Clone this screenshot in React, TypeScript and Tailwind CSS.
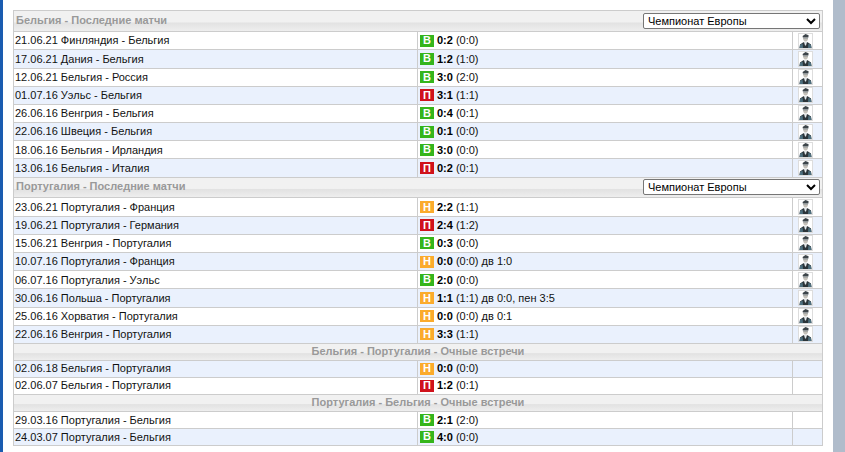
import React from 'react';

type Match = { text: string; res: 'В' | 'Н' | 'П'; score: string; rest: string };

const belgium: Match[] = [
  { text: '21.06.21 Финляндия - Бельгия', res: 'В', score: '0:2', rest: '(0:0)' },
  { text: '17.06.21 Дания - Бельгия', res: 'В', score: '1:2', rest: '(1:0)' },
  { text: '12.06.21 Бельгия - Россия', res: 'В', score: '3:0', rest: '(2:0)' },
  { text: '01.07.16 Уэльс - Бельгия', res: 'П', score: '3:1', rest: '(1:1)' },
  { text: '26.06.16 Венгрия - Бельгия', res: 'В', score: '0:4', rest: '(0:1)' },
  { text: '22.06.16 Швеция - Бельгия', res: 'В', score: '0:1', rest: '(0:0)' },
  { text: '18.06.16 Бельгия - Ирландия', res: 'В', score: '3:0', rest: '(0:0)' },
  { text: '13.06.16 Бельгия - Италия', res: 'П', score: '0:2', rest: '(0:1)' },
];

const portugal: Match[] = [
  { text: '23.06.21 Португалия - Франция', res: 'Н', score: '2:2', rest: '(1:1)' },
  { text: '19.06.21 Португалия - Германия', res: 'П', score: '2:4', rest: '(1:2)' },
  { text: '15.06.21 Венгрия - Португалия', res: 'В', score: '0:3', rest: '(0:0)' },
  { text: '10.07.16 Португалия - Франция', res: 'Н', score: '0:0', rest: '(0:0) дв 1:0' },
  { text: '06.07.16 Португалия - Уэльс', res: 'В', score: '2:0', rest: '(0:0)' },
  { text: '30.06.16 Польша - Португалия', res: 'Н', score: '1:1', rest: '(1:1) дв 0:0, пен 3:5' },
  { text: '25.06.16 Хорватия - Португалия', res: 'Н', score: '0:0', rest: '(0:0) дв 0:1' },
  { text: '22.06.16 Венгрия - Португалия', res: 'Н', score: '3:3', rest: '(1:1)' },
];

const h2h: Match[] = [
  { text: '02.06.18 Бельгия - Португалия', res: 'Н', score: '0:0', rest: '(0:0)' },
  { text: '02.06.07 Бельгия - Португалия', res: 'П', score: '1:2', rest: '(0:1)' },
];

const h2hAway: Match[] = [
  { text: '29.03.16 Португалия - Бельгия', res: 'В', score: '2:1', rest: '(2:0)' },
  { text: '24.03.07 Португалия - Бельгия', res: 'В', score: '4:0', rest: '(0:0)' },
];

const headerBg =
  'bg-[linear-gradient(to_bottom,#f1f1f1_0%,#f1f1f1_55%,#e2e2e2_60%,#eeeeee_100%)]';

const PersonIcon = () => (
  <svg width="13" height="14" viewBox="0 0 13 14">
    {/* cap */}
    <path d="M3.6 2 L6.5 0 L9.6 1.2 L9.4 3.6 L3.8 3.6 Z" fill="#3d454a" />
    {/* face */}
    <path d="M4.1 3.4 L9 3.4 L8.8 6 L7.4 7.6 L5.6 7.6 L4.3 6 Z" fill="#c4c1ba" />
    <path d="M4.1 3.4 L9 3.4 L9 4.4 L4.1 4.4 Z" fill="#7c858b" />
    {/* suit */}
    <path d="M0.5 14 L1 10.4 L4.4 8.2 L8.6 8.2 L12 10.4 L12.5 14 Z" fill="#2b3439" />
    <path d="M1 11 L3.6 9.4 L4 14 L0.6 14 Z M12 11 L9.4 9.4 L9 14 L12.4 14 Z" fill="#4d6f7e" />
    {/* collar */}
    <path d="M5 8 L8 8 L7 11.5 L6 11.5 Z" fill="#e4e9ec" />
  </svg>
);

const Badge = ({ res }: { res: Match['res'] }) => {
  const color =
    res === 'В' ? 'bg-[#35b51b]' : res === 'П' ? 'bg-[#d0121b]' : 'bg-[#fbab2c]';
  return (
    <span className={`${color} mr-[3px] flex h-[12px] w-[14px] items-center justify-center text-[11px] font-bold leading-none text-white`}>
      {res}
    </span>
  );
};

const Row = ({ match, alt, icon }: { match: Match; alt: boolean; icon: boolean }) => (
  <div className={`flex border-b border-[#cccccc] ${icon ? 'h-[18.2px]' : 'h-[17px]'} ${alt ? 'bg-[#eaf1fd]' : 'bg-white'}`}>
    <div className="flex w-[404px] shrink-0 items-center border-r border-[#cccccc] pl-[1px]">{match.text}</div>
    <div className="flex w-[375px] shrink-0 items-center border-r border-[#cccccc] pl-[2px]">
      <Badge res={match.res} />
      <b className="mr-[3px] text-black">{match.score}</b>
      <span>{match.rest}</span>
    </div>
    <div className="flex flex-1 items-center pl-[5px]">
      {icon && (
        <span className="flex h-[16px] w-[15px] items-center justify-center border border-[#dddddd] bg-white">
          <PersonIcon />
        </span>
      )}
    </div>
  </div>
);

const SectionHeader = ({ title, tall }: { title: string; tall?: boolean }) => (
  <div className={`flex items-center justify-between border-b border-[#cccccc] pl-[2px] pr-[2px] ${tall ? 'h-[21.15px]' : 'h-[20.85px]'} ${headerBg}`}>
    <b className="mb-[2px] text-[#999999]">{title}</b>
    <select className="mb-[1px] h-[16px] w-[177px] rounded-[2px] border border-[#767676] bg-white pl-0 text-[11px] text-black">
      <option>Чемпионат Европы</option>
    </select>
  </div>
);

const CenterHeader = ({ title, short }: { title: string; short?: boolean }) => (
  <div className={`flex items-center justify-center border-b border-[#cccccc] ${short ? 'h-[16.7px]' : 'h-[17.3px]'} ${headerBg}`}>
    <b className="mb-[2px] text-[#999999]">{title}</b>
  </div>
);

const App: React.FC = () => {
  return (
    <div className="flex h-[452px] w-[845px] overflow-hidden bg-white font-['Liberation_Sans',Arial,sans-serif] text-[11px] text-[#111111]">
      <div className="w-[3px] shrink-0 bg-[#1a5cb0]" />
      <div className="w-[830px] shrink-0 pl-[10px] pt-[10px]">
        <div className="w-[810px] border-x border-t border-[#cccccc]">
          <SectionHeader title="Бельгия - Последние матчи" tall />
          {belgium.map((m, i) => (
            <Row key={m.text} match={m} alt={i % 2 === 1} icon />
          ))}
          <SectionHeader title="Португалия - Последние матчи" />
          {portugal.map((m, i) => (
            <Row key={m.text} match={m} alt={i % 2 === 1} icon />
          ))}
          <CenterHeader title="Бельгия - Португалия - Очные встречи" short />
          {h2h.map((m, i) => (
            <Row key={m.text} match={m} alt={i % 2 === 0} icon={false} />
          ))}
          <CenterHeader title="Португалия - Бельгия - Очные встречи" />
          {h2hAway.map((m, i) => (
            <Row key={m.text} match={m} alt={i % 2 === 1} icon={false} />
          ))}
        </div>
      </div>
      <div className="flex-1 bg-[#b0bccb]" />
    </div>
  );
};

export default App;
